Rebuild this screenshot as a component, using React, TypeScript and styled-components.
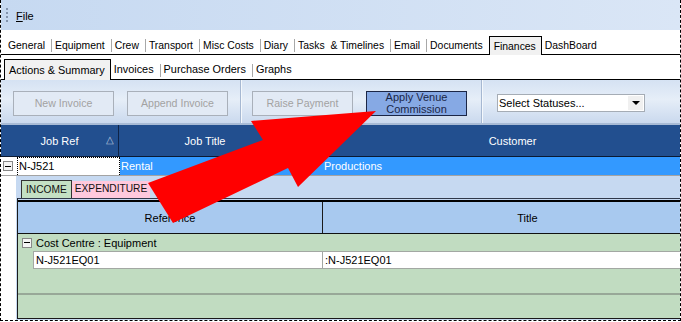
import React from "react";
import styled, { createGlobalStyle } from "styled-components";

const Global = createGlobalStyle`
  html, body { margin: 0; padding: 0; background: #fff; }
  body { font-family: "Liberation Sans", Arial, sans-serif; font-size: 11px; color: #000; }
`;

const Root = styled.div`
  position: relative;
  width: 681px;
  height: 321px;
  box-sizing: border-box;
  overflow: hidden;
  border-left: 1px dashed #000;
  border-right: 1px dashed #000;
  border-bottom: 1px dashed #000;
  display: flex;
  flex-direction: column;
  background: #fff;
`;

const MenuBar = styled.div`
  height: 30px;
  flex: none;
  display: flex;
  align-items: center;
  padding-left: 5px;
  gap: 8px;
  background: linear-gradient(90deg, #c6d9f1, #dae6f6);
`;

const Grip = styled.div`
  width: 2px;
  height: 14px;
  background: repeating-linear-gradient(#8394ad 0 2px, transparent 2px 4px);
`;

const MenuItem = styled.span`
  font-size: 11px;
  color: #000;
  padding-top: 1px;
  & u { text-decoration: underline; }
`;

const TabStrip = styled.div<{ $pad: number }>`
  height: 25px;
  flex: none;
  box-sizing: border-box;
  display: flex;
  align-items: flex-end;
  padding-left: ${(p) => p.$pad}px;
  border-bottom: 1px solid #000;
  background: #fff;
`;

const TabItem = styled.div<{ $active?: boolean; $h: number; $fs: number }>`
  box-sizing: border-box;
  height: ${(p) => p.$h}px;
  line-height: ${(p) => p.$h + 1}px;
  padding: 0 6px 0 3px;
  white-space: nowrap;
  font-size: ${(p) => p.$fs}px;
  ${(p) =>
    p.$active
      ? `background:#f1f1f1; border:1px solid #000; border-bottom:none; margin-bottom:-1px; height:${p.$h + 1}px; padding: 0 5px 0 4px;`
      : ``}
`;

const TabSep = styled.div`
  width: 1px;
  height: 13px;
  margin-bottom: 2px;
  background: #a8a8a8;
`;

const Toolbar = styled.div`
  height: 45px;
  flex: none;
  box-sizing: border-box;
  display: flex;
  align-items: stretch;
  background: linear-gradient(#d5e2f3, #e6eef8 45%, #cad9ee);
  border-bottom: 2px solid #a8bbd6;
`;

const ToolGroup = styled.div<{ $pl: number; $pr: number }>`
  display: flex;
  align-items: center;
  gap: 13px;
  padding: 3px ${(p) => p.$pr}px 0 ${(p) => p.$pl}px;
`;

const ToolSep = styled.div`
  width: 1px;
  border-right: 1px solid #f4f8fc;
  background: #a6b8d2;
`;

const ToolButton = styled.div<{ $primary?: boolean }>`
  box-sizing: border-box;
  width: 101px;
  height: 25px;
  display: flex;
  align-items: center;
  justify-content: center;
  text-align: center;
  font-size: 10.6px;
  line-height: 12px;
  ${(p) =>
    p.$primary
      ? `background:#86a9e4; border:1px solid #1b2646; color:#1b2646; font-size: 11px;`
      : `background:#e2eaf5; border:1px solid #a9b0ba; color:#a2a2a2;`}
`;

const SelectBox = styled.div`
  box-sizing: border-box;
  width: 148px;
  height: 18px;
  display: flex;
  align-items: center;
  background: #fff;
  border: 1px solid #a5acb5;
  font-size: 11px;
  padding-left: 1px;
`;

const SelectText = styled.span`
  flex: 1;
`;

const SelectDrop = styled.div`
  width: 15px;
  height: 14px;
  margin-right: 1px;
  background: #f0f0f0;
  display: flex;
  align-items: center;
  justify-content: center;
`;

const Triangle = styled.div`
  width: 0;
  height: 0;
  border-left: 4px solid transparent;
  border-right: 4px solid transparent;
  border-top: 4px solid #000;
`;

const GridHeader = styled.div`
  height: 32px;
  flex: none;
  box-sizing: border-box;
  display: flex;
  background: #224f8f;
  border-bottom: 1px solid #0b1a33;
  overflow: hidden;
`;

const HeadCell = styled.div<{ $w: number }>`
  position: relative;
  flex: none;
  width: ${(p) => p.$w}px;
  box-sizing: border-box;
  border-right: 1px solid #0e2347;
  display: flex;
  align-items: center;
  justify-content: center;
  color: #fff;
  font-size: 11px;
`;

const SortMark = styled.span`
  position: absolute;
  right: 4px;
  top: 9px;
  color: #b8c6dc;
  font-size: 10px;
`;

const JobRow = styled.div`
  height: 19px;
  flex: none;
  box-sizing: border-box;
  display: flex;
  align-items: stretch;
  border-bottom: 1px solid #a3a3a3;
  background: #fff;
  overflow: hidden;
`;

const ExpandBox = styled.div<{ $ml: number }>`
  flex: none;
  box-sizing: border-box;
  width: 10px;
  height: 10px;
  margin: 0 4px 0 ${(p) => p.$ml}px;
  align-self: center;
  border: 1px solid #888;
  background: #f4f4f4;
  display: flex;
  align-items: center;
  justify-content: center;
  &::after {
    content: "";
    width: 6px;
    height: 1px;
    background: #000;
  }
`;

const RefCell = styled.div`
  flex: none;
  width: 103px;
  box-sizing: border-box;
  border: 1px dotted #000;
  border-bottom: none;
  padding-left: 1px;
  line-height: 17px;
  font-size: 11px;
`;

const SelCell = styled.div<{ $w?: number }>`
  flex: ${(p) => (p.$w ? "none" : "1")};
  width: ${(p) => (p.$w ? `${p.$w}px` : "auto")};
  background: #3399ff;
  color: #fff;
  padding-left: 1px;
  line-height: 18px;
  font-size: 11px;
  white-space: nowrap;
`;

const DetailArea = styled.div`
  flex: 1;
  display: flex;
  min-height: 0;
`;

const DetailGutter = styled.div`
  width: 15px;
  flex: none;
  background: #fff;
`;

const DetailPanel = styled.div`
  flex: 1;
  display: flex;
  flex-direction: column;
  background: #c6d9f1;
  padding-top: 4px;
  min-width: 0;
`;

const BandTabs = styled.div`
  display: flex;
  height: 18px;
  padding-left: 5px;
  flex: none;
`;

const BandTab = styled.div<{ $kind: "income" | "exp" }>`
  box-sizing: border-box;
  height: 18px;
  line-height: 17px;
  font-size: 10.2px;
  padding: 0 3px;
  color: #111;
  ${(p) =>
    p.$kind === "income"
      ? `background:#c4e0c4; border:1px solid #333; border-bottom:none; padding: 0 4px;`
      : `background:#ffc9dd; margin-top:1px; height:17px; line-height:16px;`}
`;

const InnerGrid = styled.div`
  flex: 1;
  display: flex;
  flex-direction: column;
  margin-left: 1px;
  border-left: 1px solid #1a1a1a;
  border-top: 1px solid #30384a;
  padding-top: 1px;
  border-bottom: 1px solid #1a1a1a;
  margin-bottom: 1px;
  overflow: hidden;
`;

const InnerHeader = styled.div`
  height: 34px;
  flex: none;
  box-sizing: border-box;
  display: flex;
  background: #a8c9ef;
  border-top: 2px solid #000;
  border-bottom: 1px solid #111;
`;

const InnerHeadCell = styled.div<{ $w: number }>`
  flex: none;
  width: ${(p) => p.$w}px;
  box-sizing: border-box;
  border-right: 1px solid #1a1a1a;
  display: flex;
  align-items: center;
  justify-content: center;
  font-size: 11px;
  color: #000;
`;

const GroupRow = styled.div`
  height: 17px;
  flex: none;
  display: flex;
  align-items: center;
  background: #c1dcc1;
  font-size: 11px;
`;

const ItemRow = styled.div`
  height: 18px;
  flex: none;
  box-sizing: border-box;
  display: flex;
  background: #c1dcc1;
  padding-left: 15px;
`;

const ItemCell = styled.div<{ $w?: number }>`
  flex: ${(p) => (p.$w ? "none" : "1")};
  width: ${(p) => (p.$w ? `${p.$w}px` : "auto")};
  box-sizing: border-box;
  background: #fff;
  border-top: 1px solid #a3a8a3;
  border-bottom: 1px solid #a3a8a3;
  border-left: 1px solid #a3a8a3;
  padding-left: 2px;
  line-height: 16px;
  font-size: 11px;
  white-space: nowrap;
`;

const EmptyRow = styled.div<{ $h: number; $line?: boolean }>`
  height: ${(p) => p.$h}px;
  flex: none;
  box-sizing: border-box;
  background: #c1dcc1;
  ${(p) => (p.$line ? `border-bottom: 2px solid #98a898;` : ``)}
`;

const FillRow = styled.div`
  flex: 1;
  background: #c1dcc1;
`;

const Overlay = styled.svg`
  position: absolute;
  left: -1px;
  top: 0;
  pointer-events: none;
`;

const tabs1 = [
  "General",
  "Equipment",
  "Crew",
  "Transport",
  "Misc Costs",
  "Diary",
  "Tasks  & Timelines",
  "Email",
  "Documents",
  "Finances",
  "DashBoard",
];
const tabs2 = ["Actions & Summary", "Invoices", "Purchase Orders", "Graphs"];

function Tabs({
  items,
  active,
  h,
  pad,
  fs,
}: {
  items: string[];
  active: string;
  h: number;
  pad: number;
  fs: number;
}) {
  const out: React.ReactNode[] = [];
  items.forEach((t, i) => {
    if (i > 0 && t !== active && items[i - 1] !== active) out.push(<TabSep key={"s" + i} />);
    out.push(
      <TabItem key={t} $active={t === active} $h={h} $fs={fs}>
        {t.replace(/ {2}/g, "\u00a0 ")}
      </TabItem>
    );
  });
  return <TabStrip $pad={pad}>{out}</TabStrip>;
}

export default function App() {
  return (
    <>
      <Global />
      <Root>
        <MenuBar>
          <Grip />
          <MenuItem>
            <u>F</u>ile
          </MenuItem>
        </MenuBar>
        <Tabs items={tabs1} active="Finances" h={18} pad={4} fs={10.4} />
        <Tabs items={tabs2} active="Actions & Summary" h={20} pad={3} fs={10.9} />
        <Toolbar>
          <ToolGroup $pl={12} $pr={12}>
            <ToolButton>New Invoice</ToolButton>
            <ToolButton>Append Invoice</ToolButton>
          </ToolGroup>
          <ToolSep />
          <ToolGroup $pl={10} $pr={14}>
            <ToolButton>Raise Payment</ToolButton>
            <ToolButton $primary>
              Apply Venue
              <br />
              Commission
            </ToolButton>
          </ToolGroup>
          <ToolSep />
          <ToolGroup $pl={14} $pr={0}>
            <SelectBox>
              <SelectText>Select Statuses...</SelectText>
              <SelectDrop>
                <Triangle />
              </SelectDrop>
            </SelectBox>
          </ToolGroup>
        </Toolbar>
        <GridHeader>
          <HeadCell $w={118}>
            Job Ref
            <SortMark>△</SortMark>
          </HeadCell>
          <HeadCell $w={173}>Job Title</HeadCell>
          <HeadCell $w={442}>Customer</HeadCell>
        </GridHeader>
        <JobRow>
          <ExpandBox $ml={2} />
          <RefCell>N-J521</RefCell>
          <SelCell $w={202}>Rental</SelCell>
          <SelCell>Productions</SelCell>
        </JobRow>
        <DetailArea>
          <DetailGutter />
          <DetailPanel>
            <BandTabs>
              <BandTab $kind="income">INCOME</BandTab>
              <BandTab $kind="exp">EXPENDITURE</BandTab>
            </BandTabs>
            <InnerGrid>
              <InnerHeader>
                <InnerHeadCell $w={305}>Reference</InnerHeadCell>
                <InnerHeadCell $w={410}>Title</InnerHeadCell>
              </InnerHeader>
              <GroupRow>
                <ExpandBox $ml={4} />
                Cost Centre : Equipment
              </GroupRow>
              <ItemRow>
                <ItemCell $w={289}>N-J521EQ01</ItemCell>
                <ItemCell>:N-J521EQ01</ItemCell>
              </ItemRow>
              <EmptyRow $h={26} $line />
              <FillRow />
            </InnerGrid>
          </DetailPanel>
        </DetailArea>
        <Overlay width={681} height={322} viewBox="0 0 681 322">
          <polygon
            points="376,111 251,121 263,140 148,183 173,223 288,168 298,187"
            fill="#ff0000"
          />
        </Overlay>
      </Root>
    </>
  );
}
